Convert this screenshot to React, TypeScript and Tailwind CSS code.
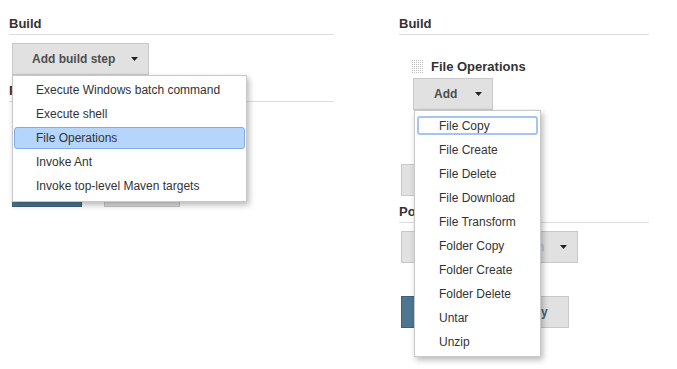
import React from 'react';

function Caret() {
  return (
    <svg width="7" height="4" viewBox="0 0 7 4" className="shrink-0">
      <path d="M0 0h7L3.5 4z" fill="#222" />
    </svg>
  );
}

function DragHandle() {
  const dots = [];
  for (let x = 0; x < 12; x += 2) {
    for (let y = 0; y < 14; y += 2) {
      dots.push(<rect key={`${x}-${y}`} x={x} y={y} width="1" height="1" fill="#bcbcbc" />);
    }
  }
  return (
    <svg width="12" height="14" viewBox="0 0 12 14" className="shrink-0">
      {dots}
    </svg>
  );
}

function Heading({ children }: { children: React.ReactNode }) {
  return (
    <div className="h-[21px] leading-[20px] text-[13px] font-bold text-[#333] border-b border-[#dddddd]">
      {children}
    </div>
  );
}

function GrayButton({ label, width, pl, faded }: { label: string; width: string; pl: string; faded?: boolean }) {
  return (
    <div
      className={`h-[32px] ${width} ${pl} pr-[10px] flex items-center justify-between bg-[#e1e1e1] border border-[#c8c8c8] text-[12px] font-bold ${faded ? 'text-[#b3c7d8]' : 'text-[#4e4e4e]'}`}
    >
      <span className="whitespace-nowrap">{label}</span>
      <Caret />
    </div>
  );
}

function SaveApply() {
  return (
    <div className="flex gap-[22px] text-[12px] font-bold">
      <div className="h-[32px] w-[70px] flex items-center justify-center bg-[#4d7690] border border-[#3d6077] text-white">Save</div>
      <div className="h-[32px] w-[76px] flex items-center justify-center bg-[#e1e1e1] border border-[#c8c8c8] text-[#3e5f7b]">Apply</div>
    </div>
  );
}

const buildSteps = [
  'Execute Windows batch command',
  'Execute shell',
  'File Operations',
  'Invoke Ant',
  'Invoke top-level Maven targets',
];

const fileOps = [
  'File Copy',
  'File Create',
  'File Delete',
  'File Download',
  'File Transform',
  'Folder Copy',
  'Folder Create',
  'Folder Delete',
  'Untar',
  'Unzip',
];

export default function App() {
  return (
    <div className="relative w-[677px] h-[369px] bg-white overflow-hidden font-['Liberation_Sans',Arial,sans-serif] text-[#333]">
      <div className="flex">
        {/* left: picking a build step */}
        <div className="ml-[9px] w-[325px] pt-[14px]">
          <Heading>Build</Heading>
          <div className="relative mt-[8px] ml-[3px] w-[137px] z-10">
            <GrayButton label="Add build step" width="w-[137px]" pl="pl-[19px]" />
            <div className="absolute top-[32px] left-0 w-[235px] bg-white border border-[#c8c8c8] pt-[2px] pb-[3px] shadow-[2px_3px_6px_rgba(0,0,0,0.28)]">
              {buildSteps.map((s) => (
                <div key={s} className="h-[24px] px-[1px] py-[1px] text-[12px]">
                  <div
                    className={`h-[22px] pl-[21px] flex items-center rounded-[3px] border ${
                      s === 'File Operations' ? 'bg-[#b6d5fb] border-[#7fabea]' : 'border-transparent'
                    }`}
                  >
                    {s}
                  </div>
                </div>
              ))}
            </div>
          </div>
          <div className="mt-[6px]">
            <Heading>Post-build Actions</Heading>
          </div>
          <div className="mt-[7px] ml-[3px]">
            <GrayButton label="Add post-build action" width="w-[177px]" pl="pl-[19px]" />
          </div>
          <div className="mt-[34px] ml-[3px]">
            <SaveApply />
          </div>
        </div>

        {/* right: file operations step */}
        <div className="ml-[65px] w-[250px] pt-[14px]">
          <Heading>Build</Heading>
          <div className="mt-[22px] ml-[13px] h-[20px] flex items-center gap-[7px]">
            <DragHandle />
            <span className="text-[13px] font-bold text-[#333]">File Operations</span>
          </div>
          <div className="relative mt-[1px] ml-[14px] w-[80px] z-10">
            <GrayButton label="Add" width="w-[80px]" pl="pl-[20px]" />
            <div className="absolute top-[32px] left-[1px] w-[127px] bg-white border border-[#c8c8c8] pt-[3px] pb-[2px] shadow-[2px_3px_6px_rgba(0,0,0,0.28)]">
              {fileOps.map((s) => (
                <div key={s} className="h-[24px] px-[2px] pt-[2px] pb-[3px] text-[12px]">
                  <div
                    className={`h-[19px] pl-[20px] flex items-center rounded-[3px] border-2 ${
                      s === 'File Copy' ? 'border-[#a3c5f6]' : 'border-transparent'
                    }`}
                  >
                    {s}
                  </div>
                </div>
              ))}
            </div>
          </div>
          <div className="mt-[54px] ml-[2px]">
            <GrayButton label="Add build step" width="w-[137px]" pl="pl-[19px]" />
          </div>
          <div className="mt-[6px]">
            <Heading>Post-build Actions</Heading>
          </div>
          <div className="mt-[8px] ml-[2px]">
            <GrayButton label="Add post-build action" width="w-[177px]" pl="pl-[19px]" faded />
          </div>
          <div className="mt-[33px] ml-[2px]">
            <SaveApply />
          </div>
        </div>
      </div>
    </div>
  );
}
